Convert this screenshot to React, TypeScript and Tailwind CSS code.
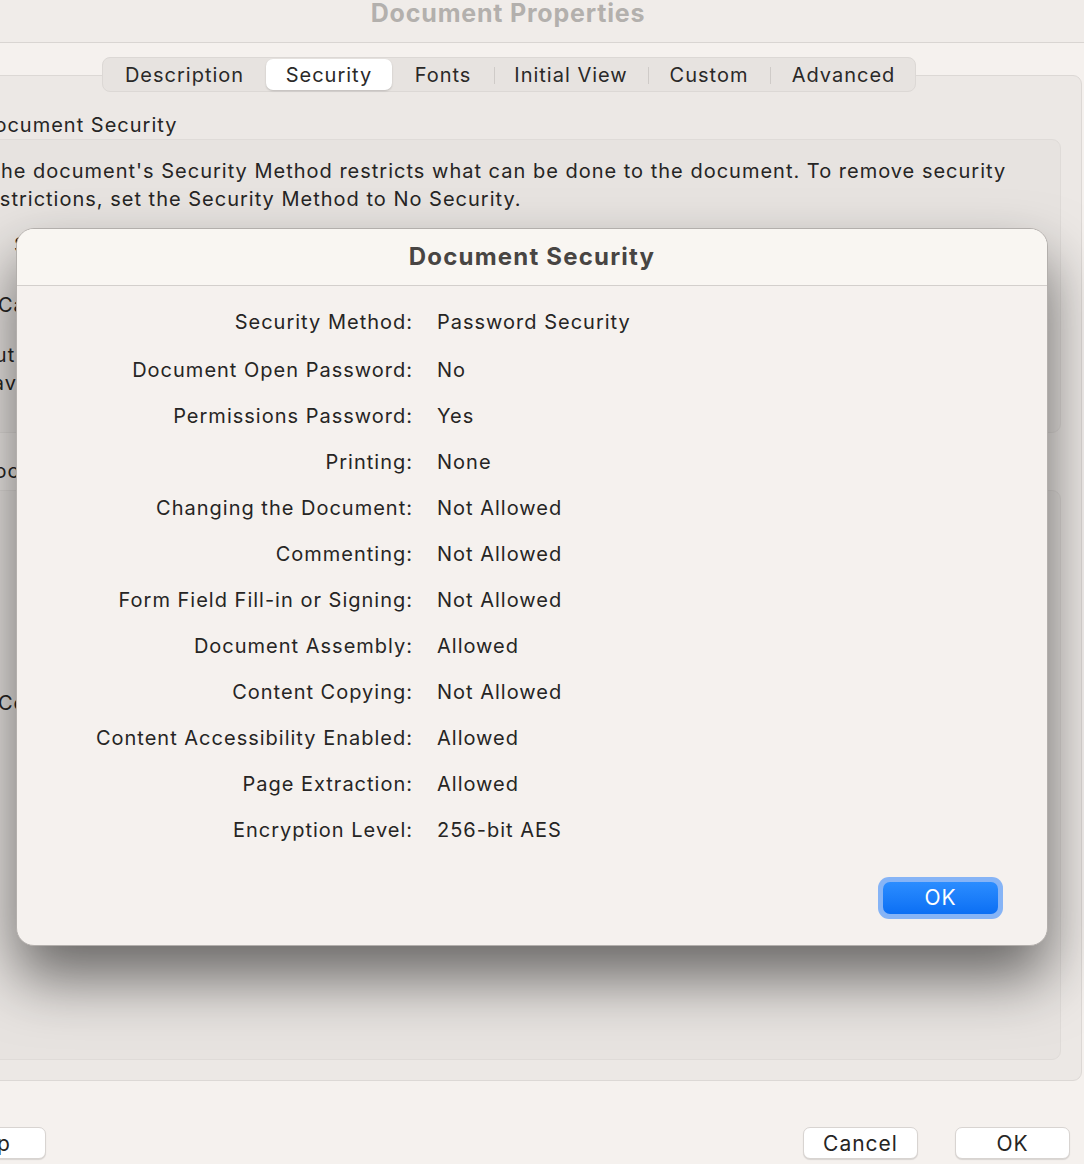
import React from 'react'

const tabs = [
  { name: 'Description', w: 'w-[163px]' },
  { name: 'Security', w: 'w-[126px]', active: true },
  { name: 'Fonts', w: 'w-[102px]' },
  { name: 'Initial View', w: 'w-[154px]', sep: true },
  { name: 'Custom', w: 'w-[122px]', sep: true },
  { name: 'Advanced', w: 'w-[147px]', sep: true },
]

const rows = [
  ['Security Method:', 'Password Security'],
  ['Document Open Password:', 'No'],
  ['Permissions Password:', 'Yes'],
  ['Printing:', 'None'],
  ['Changing the Document:', 'Not Allowed'],
  ['Commenting:', 'Not Allowed'],
  ['Form Field Fill-in or Signing:', 'Not Allowed'],
  ['Document Assembly:', 'Allowed'],
  ['Content Copying:', 'Not Allowed'],
  ['Content Accessibility Enabled:', 'Allowed'],
  ['Page Extraction:', 'Allowed'],
  ['Encryption Level:', '256-bit AES'],
]

const App = () => {
  return (
    <div className="relative w-[1084px] h-[1164px] overflow-hidden bg-[#f5f1ee] text-[#262524] tracking-[1px] font-['Inter','Liberation_Sans',sans-serif]">
      {/* title bar */}
      <header className="h-[43px] border-b border-[#d9d5d2] bg-[#f0ece9] flex justify-center overflow-hidden pr-[68px]">
        <h1 className="-mt-[3px] text-[25px] leading-[32px] font-bold tracking-[0.8px] text-[#b3b0ad]">Document Properties</h1>
      </header>

      {/* tab bar */}
      <div className="relative z-10 mt-[14px] -mb-[17px] ml-[102px] flex h-[35px] w-[814px] items-center rounded-[8px] border border-[#dcd8d5] bg-[#e7e3e0] text-[20px] text-[#2a2928]">
        {tabs.map((t) => (
          <div key={t.name} className={`relative flex h-full shrink-0 items-center justify-center ${t.w}`}>
            {t.sep && <span className="absolute left-0 top-[9px] h-[17px] w-px bg-[#cfcbc8]" />}
            {t.active && <span className="absolute inset-y-[1px] inset-x-0 rounded-[7px] bg-white shadow-[0_1px_2px_rgba(0,0,0,0.18)]" />}
            <span className="relative">{t.name}</span>
          </div>
        ))}
      </div>

      {/* tab content box */}
      <div className="-ml-[10px] h-[1006px] w-[1092px] rounded-[9px] border border-[#dcd8d5] bg-[#ece8e5] pt-[35px]">
        <h2 className="-ml-[12px] h-[28px] text-[20px] leading-[28px]">Document Security</h2>
        <div className="h-[294px] w-[1070px] rounded-[9px] border border-[#dfdbd8] bg-[#e7e3e0] pt-[17px] text-[20px] leading-[28px]">
          <p className="-ml-[5px] whitespace-nowrap">The document's Security Method restricts what can be done to the document. To remove security</p>
          <p className="-ml-[13px] whitespace-nowrap">restrictions, set the Security Method to No Security.</p>
          <div className="ml-[22px] mt-[18px]">Security Method:</div>
          <div className="ml-[6px] mt-[32px]">Can be Opened by:</div>
          <div className="mt-[22px]">
            <div className="-ml-[12px]">Authoring restrictions apply to this document</div>
            <div className="-ml-[15px]">Have the owner remove them</div>
          </div>
        </div>
        <h2 className="-ml-[12px] mt-[24px] h-[28px] text-[20px] leading-[28px]">Document Restrictions Summary</h2>
        <div className="mt-[5px] h-[570px] w-[1070px] rounded-[9px] border border-[#dfdbd8] bg-[#e7e3e0] pt-[198px] text-[20px] leading-[28px]">
          <div className="ml-[6px]">Content Copying:</div>
        </div>
      </div>

      {/* bottom buttons */}
      <div className="mt-[46px] flex h-[32px] items-center text-[21px]">
        <button className="-ml-[74px] h-[32px] w-[120px] rounded-[7px] border border-[#d8d4d1] bg-white shadow-[0_1px_1px_rgba(0,0,0,0.12)]">Help</button>
        <div className="flex-1" />
        <button className="h-[32px] w-[115px] rounded-[7px] border border-[#d8d4d1] bg-white shadow-[0_1px_1px_rgba(0,0,0,0.12)]">Cancel</button>
        <button className="ml-[37px] mr-[14px] h-[32px] w-[115px] rounded-[7px] border border-[#d8d4d1] bg-white shadow-[0_1px_1px_rgba(0,0,0,0.12)]">OK</button>
      </div>

      {/* sheet */}
      <div className="absolute left-[16px] top-[228px] flex h-[718px] w-[1032px] flex-col overflow-hidden rounded-[18px] border border-[#b3afac] bg-[#f5f1ee] shadow-[0_32px_60px_rgba(0,0,0,0.55)]">
        <div className="flex h-[57px] shrink-0 items-center justify-center border-b border-[#d3cfcc] bg-[#f9f6f2]">
          <h3 className="text-[24px] font-bold tracking-[1.2px] text-[#484543]">Document Security</h3>
        </div>
        <div className="grid grid-cols-[396px_1fr] gap-x-[24px] pt-[22px] text-[20px] leading-[28px]">
          {rows.map(([label, value], i) => (
            <React.Fragment key={label}>
              <div className={`text-right ${i === 1 ? 'mt-[20px]' : i > 1 ? 'mt-[18px]' : ''}`}>{label}</div>
              <div className={`${i === 1 ? 'mt-[20px]' : i > 1 ? 'mt-[18px]' : ''}`}>{value}</div>
            </React.Fragment>
          ))}
        </div>
        <div className="mt-auto mb-[26px] mr-[44px] flex justify-end">
          <div className="rounded-[11px] bg-[#86b4f6] p-[5px]">
            <button className="h-[32px] w-[115px] rounded-[7px] bg-gradient-to-b from-[#2b8dff] to-[#0a6ff4] text-[21px] text-white">OK</button>
          </div>
        </div>
      </div>
    </div>
  )
}

export default App
